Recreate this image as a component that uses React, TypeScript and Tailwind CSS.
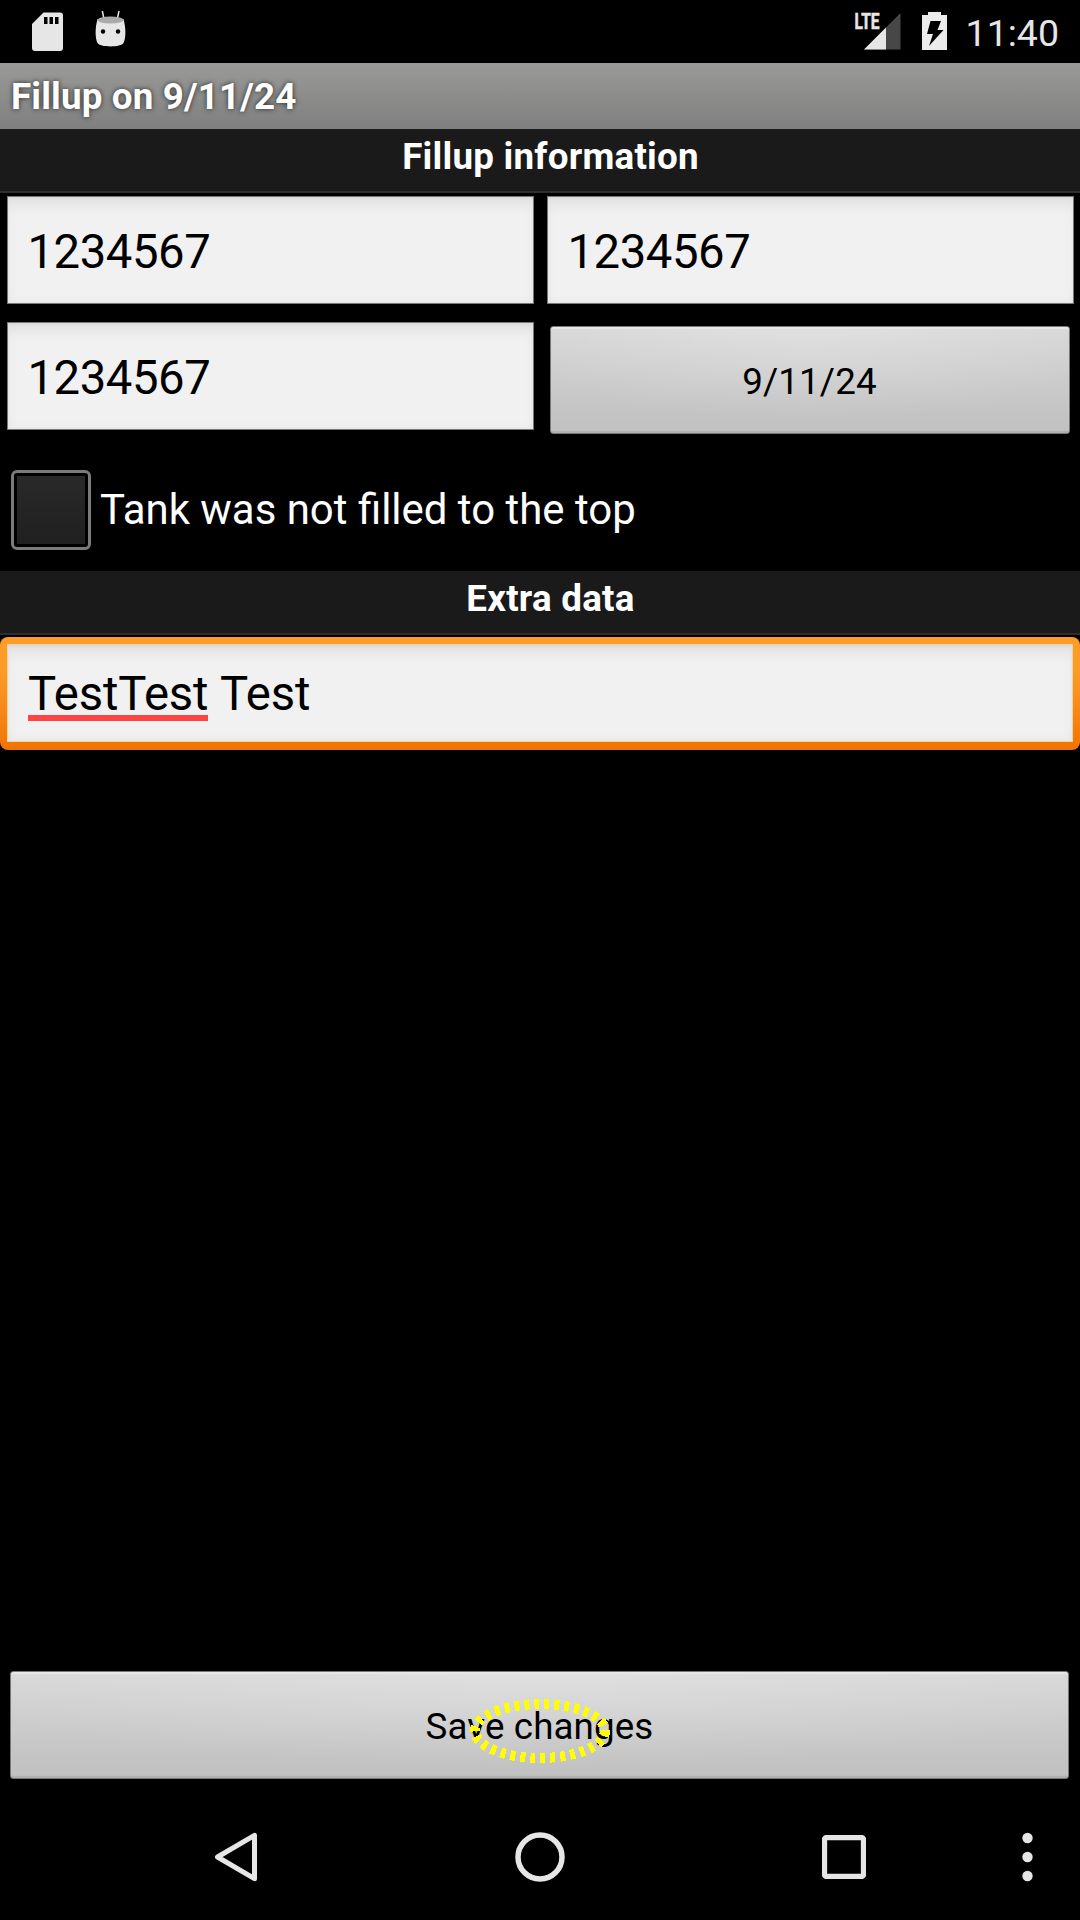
import type { ReactNode } from "react";

const fieldFill =
  "bg-[#f1f1f1] shadow-[inset_0_2px_1px_#dcdcdc,inset_0_14px_12px_-6px_#e2e2e2,inset_0_0_8px_#e4e4e4]";

function StatusBar() {
  return (
    <div className="flex h-[63px] shrink-0 items-start justify-between">
      <div className="flex">
        <svg className="ml-8 mt-[12px] h-[39px] w-[31px]" viewBox="0 0 31 39">
          <path d="M11.5 .5H28a3 3 0 0 1 3 3V36a3 3 0 0 1-3 3H3a3 3 0 0 1-3-3V12Z" fill="#e6e6e6" />
          <path d="M12 5h3.5v7H12zM17.500 5H21v7h-3.500zM23 5h3.500v7H23z" fill="#000" />
        </svg>
        <svg className="ml-8 mt-[10px] h-[37px] w-[31px]" viewBox="0 0 31 37">
          <path d="M7.300 1 9 9M24 1l-1.700 8" stroke="#e6e6e6" strokeWidth="1.500" />
          <path d="M2.500 9C0 18 0 28 2.500 33 4.500 37.500 26.500 37.500 28.500 33 31 28 31 18 28.500 9Z" fill="#e6e6e6" />
          <ellipse cx="15.500" cy="10" rx="13" ry="3.500" fill="#aaa" />
          <circle cx="8" cy="21.500" r="2.200" fill="#000" />
          <circle cx="23" cy="21.500" r="2.200" fill="#000" />
        </svg>
      </div>
      <div className="flex">
        <svg className="mt-3 h-[38px] w-[46px] overflow-visible" viewBox="0 0 46 38">
          <path d="M45.500 1V37.500H9Z" fill="#474747" />
          <path d="M31 15.500V37.500H9Z" fill="#e6e6e6" />
          <path d="M0 1H25V18H0Z" fill="#000" />
          <text
            x="-0.500"
            y="17.300"
            textLength="25"
            lengthAdjust="spacingAndGlyphs"
            fontSize="22.800"
            fontWeight="700"
            fontFamily="Roboto, sans-serif"
            fill="#e6e6e6"
            stroke="#e6e6e6"
            strokeWidth="0.600"
          >
            LTE
          </text>
        </svg>
        <svg className="ml-[21px] mt-[12px] h-[38px] w-[25px]" viewBox="0 0 25 38">
          <path d="M6 0H19V3H25V38H0V3H6Z" fill="#ececec" />
          <path d="M8.500 9H19L15.500 18H21.500L7 34 11 22H5Z" fill="#000" />
        </svg>
        <span className="mr-[21px] mt-[11px] pl-[19px] text-[37.500px] leading-[44px] text-[#e6e6e6]">11:40</span>
      </div>
    </div>
  );
}

function SectionHeader({ children }: { children: string }) {
  return (
    <div className="h-[64px] shrink-0 border-b-2 border-[#2e2e2e] bg-[#1a1a1a] pl-[21px] text-center text-[36.750px] font-bold leading-[55px] tracking-[0.24px] text-white">
      {children}
    </div>
  );
}

function Field({ children }: { children: ReactNode }) {
  return (
    <div className={`flex h-[108px] w-[527px] shrink-0 items-center border border-[#777] pl-[20px] pt-[5px] text-[47.250px] tracking-[-0.45px] text-black ${fieldFill}`}>
      {children}
    </div>
  );
}

function GreyButton({ children }: { children: string }) {
  return (
    <button className="flex h-[108px] w-full items-center justify-center rounded-[3px] border border-[#777] bg-[radial-gradient(ellipse_60%_90%_at_50%_0%,#ffffff38,#ffffff00),linear-gradient(#d8d8d8,#c3c3c3_85%,#c1c1c1)] pt-[4px] text-[36.750px] tracking-[0.1px] text-black shadow-[inset_0_2px_1px_#e8e8e8,inset_0_-2px_1px_#b0b0b0]">
      {children}
    </button>
  );
}

function NavBar() {
  return (
    <div className="flex h-[126px] shrink-0 items-center">
      <svg className="ml-[214px] h-[52px] w-[44px]" viewBox="0 0 44 52">
        <path d="M40.500 4.300V47.700L3.500 26Z" fill="none" stroke="#e6e6e6" strokeWidth="5" strokeLinejoin="round" />
      </svg>
      <svg className="ml-[256px] h-[52px] w-[52px]" viewBox="0 0 52 52">
        <circle cx="26" cy="26" r="22" fill="none" stroke="#e6e6e6" strokeWidth="5.500" />
      </svg>
      <svg className="ml-[256px] h-[44px] w-[44px]" viewBox="0 0 44 44">
        <rect x="2.500" y="2.500" width="39" height="39" rx="2" fill="none" stroke="#e6e6e6" strokeWidth="5.300" />
      </svg>
      <svg className="ml-[156px] h-[50px] w-[11px]" viewBox="0 0 11 50">
        <circle cx="5.500" cy="6" r="5.200" fill="#e6e6e6" />
        <circle cx="5.500" cy="25" r="5.200" fill="#e6e6e6" />
        <circle cx="5.500" cy="44" r="5.200" fill="#e6e6e6" />
      </svg>
    </div>
  );
}

export default function App() {
  return (
    <div className="flex h-[1920px] w-[1080px] flex-col overflow-hidden bg-black font-[Roboto,sans-serif]">
      <StatusBar />
      <div className="h-[66px] shrink-0 bg-linear-to-b from-[#9a9a98] to-[#7f7f7f] pl-[11px] text-[36.750px] font-bold leading-[68px] tracking-[0.15px] text-white [text-shadow:0_0_5px_#000000bb]">
        Fillup on 9/11/24
      </div>
      <SectionHeader>Fillup information</SectionHeader>
      <div className="mt-[3px] flex gap-[13px] px-[6.500px]">
        <Field>1234567</Field>
        <Field>1234567</Field>
      </div>
      <div className="mt-[18px] flex gap-[13px] px-[6.500px]">
        <Field>1234567</Field>
        <div className="w-[527px] pl-[3px] pr-[4px] pt-1">
          <GreyButton>9/11/24</GreyButton>
        </div>
      </div>
      <label className="mt-[36px] flex h-[80px] items-center pl-[11px]">
        <span className="h-[80px] w-[80px] rounded-[6px] border-[3px] border-[#7b7b7b] p-[3px]">
          <span className="block h-full w-full bg-linear-to-b from-[#292929] to-[#202020]" />
        </span>
        <span className="pl-[9px] pt-[1px] text-[41.950px] text-white">Tank was not filled to the top</span>
      </label>
      <div className="h-[21px] shrink-0" />
      <SectionHeader>Extra data</SectionHeader>
      <div className="mt-[2px] h-[113px] shrink-0 rounded-[8px] bg-linear-to-b from-[#fd9c27] from-30% to-[#f07300] px-[7px] pb-[8px] pt-[7px]">
        <div className={`flex h-[98px] items-center border border-[#f5d0a0] pl-[20px] pt-[3px] text-[47.250px] tracking-[-0.15px] text-black ${fieldFill}`}>
          <span className="relative">
            TestTest
            <span className="absolute bottom-[9px] left-0 h-[6px] w-[180px] bg-[#ff4444]" />
          </span>
          <span className="whitespace-pre pl-[1px]"> Test</span>
        </div>
      </div>
      <div className="flex-1" />
      <div className="relative mb-[15px] pl-[10px] pr-[11px]">
        <GreyButton>Save changes</GreyButton>
        <svg className="absolute left-[468px] top-[26px] h-[68px] w-[144px]" viewBox="0 0 144 68" shapeRendering="crispEdges">
          <ellipse cx="72" cy="34" rx="65" ry="27" fill="none" stroke="#ffff00" strokeWidth="10" strokeDasharray="5 5" />
        </svg>
      </div>
      <NavBar />
    </div>
  );
}
